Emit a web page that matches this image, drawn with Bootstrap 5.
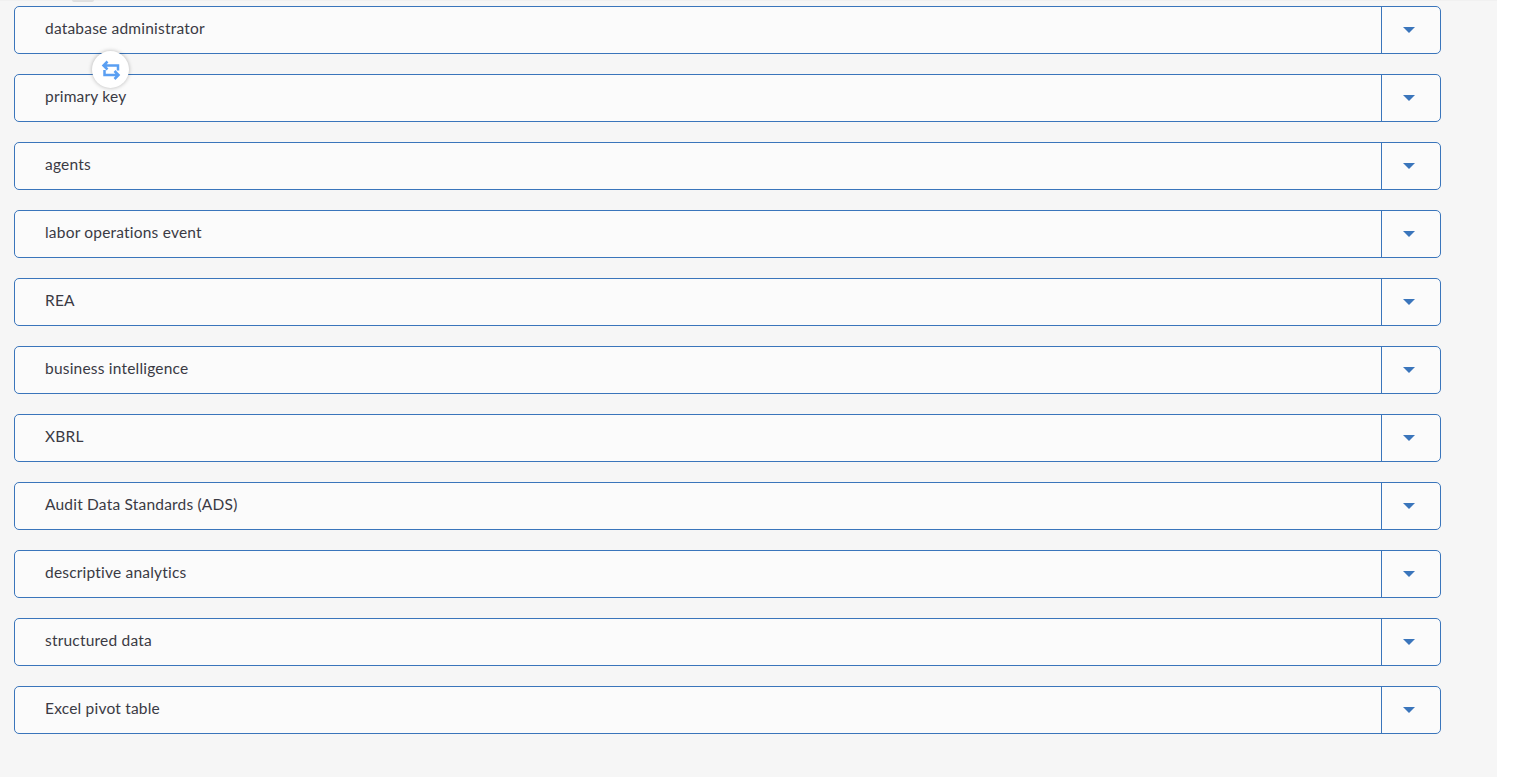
<!DOCTYPE html>
<html lang="en">
<head>
    <meta charset="UTF-8">
    <meta name="viewport" content="width=device-width, initial-scale=1.0">
    <title>Matching</title>
    <link href="https://cdn.jsdelivr.net/npm/bootstrap@5.3.0/dist/css/bootstrap.min.css" rel="stylesheet">
    <style>
        html, body { height: 100%; overflow: hidden; }
        body { background-color: #fff; font-family: "Lato", "Liberation Sans", sans-serif; }
        .page-area { width: 1497px; height: 777px; background-color: #f6f6f6; border-top: 1px solid #f1f1f1; padding: 5px 0 0 14px; position: relative; }
        .top-tab { position: absolute; left: 72px; top: -1px; width: 22px; height: 2px; background-color: #e0e0e0; border-radius: 0 0 3px 3px; }
        .term-list { width: 1427px; gap: 20px; }
        .term-row { height: 48px; background-color: #fbfbfb; border: 1px solid #3a75bb; border-radius: 5px; }
        .term-label { padding-left: 30px; font-size: 15.5px; font-weight: 400; letter-spacing: .2px; color: #3a3a44; line-height: 42px; }
        .term-toggle { width: 59px; padding-right: 4px; padding-bottom: 1px; border-left: 1px solid #3a75bb; }
        .caret-down { width: 0; height: 0; border-left: 6px solid transparent; border-right: 6px solid transparent; border-top: 6px solid #3a75bb; }
        .swap-btn { position: absolute; left: 92px; top: 50px; width: 37px; height: 37px; background-color: #fff; border-radius: 50%; box-shadow: 0 0 4px rgba(0, 0, 0, 0.28); }
    </style>
</head>
<body>
    <div class="page-area">
        <div class="top-tab"></div>
        <div class="term-list d-flex flex-column">
            <div class="term-row d-flex justify-content-between">
                <div class="term-label">database administrator</div>
                <div class="term-toggle d-flex align-items-center justify-content-center"><span class="caret-down"></span></div>
            </div>
            <div class="term-row d-flex justify-content-between">
                <div class="term-label">primary key</div>
                <div class="term-toggle d-flex align-items-center justify-content-center"><span class="caret-down"></span></div>
            </div>
            <div class="term-row d-flex justify-content-between">
                <div class="term-label">agents</div>
                <div class="term-toggle d-flex align-items-center justify-content-center"><span class="caret-down"></span></div>
            </div>
            <div class="term-row d-flex justify-content-between">
                <div class="term-label">labor operations event</div>
                <div class="term-toggle d-flex align-items-center justify-content-center"><span class="caret-down"></span></div>
            </div>
            <div class="term-row d-flex justify-content-between">
                <div class="term-label">REA</div>
                <div class="term-toggle d-flex align-items-center justify-content-center"><span class="caret-down"></span></div>
            </div>
            <div class="term-row d-flex justify-content-between">
                <div class="term-label">business intelligence</div>
                <div class="term-toggle d-flex align-items-center justify-content-center"><span class="caret-down"></span></div>
            </div>
            <div class="term-row d-flex justify-content-between">
                <div class="term-label">XBRL</div>
                <div class="term-toggle d-flex align-items-center justify-content-center"><span class="caret-down"></span></div>
            </div>
            <div class="term-row d-flex justify-content-between">
                <div class="term-label">Audit Data Standards (ADS)</div>
                <div class="term-toggle d-flex align-items-center justify-content-center"><span class="caret-down"></span></div>
            </div>
            <div class="term-row d-flex justify-content-between">
                <div class="term-label">descriptive analytics</div>
                <div class="term-toggle d-flex align-items-center justify-content-center"><span class="caret-down"></span></div>
            </div>
            <div class="term-row d-flex justify-content-between">
                <div class="term-label">structured data</div>
                <div class="term-toggle d-flex align-items-center justify-content-center"><span class="caret-down"></span></div>
            </div>
            <div class="term-row d-flex justify-content-between">
                <div class="term-label">Excel pivot table</div>
                <div class="term-toggle d-flex align-items-center justify-content-center"><span class="caret-down"></span></div>
            </div>
        </div>
        <div class="swap-btn d-flex align-items-center justify-content-center">
            <svg width="20" height="20" viewBox="0 0 20 20" fill="none" stroke="#5a9ff2" stroke-width="2.5">
                <path d="M17 10.5V5.5H2.5M6.5 1.5L2.5 5.5L6.5 9.5"/>
                <path d="M3.5 10v5h14M13.5 11L17.5 15L13.5 19"/>
            </svg>
        </div>
    </div>
</body>
</html>
